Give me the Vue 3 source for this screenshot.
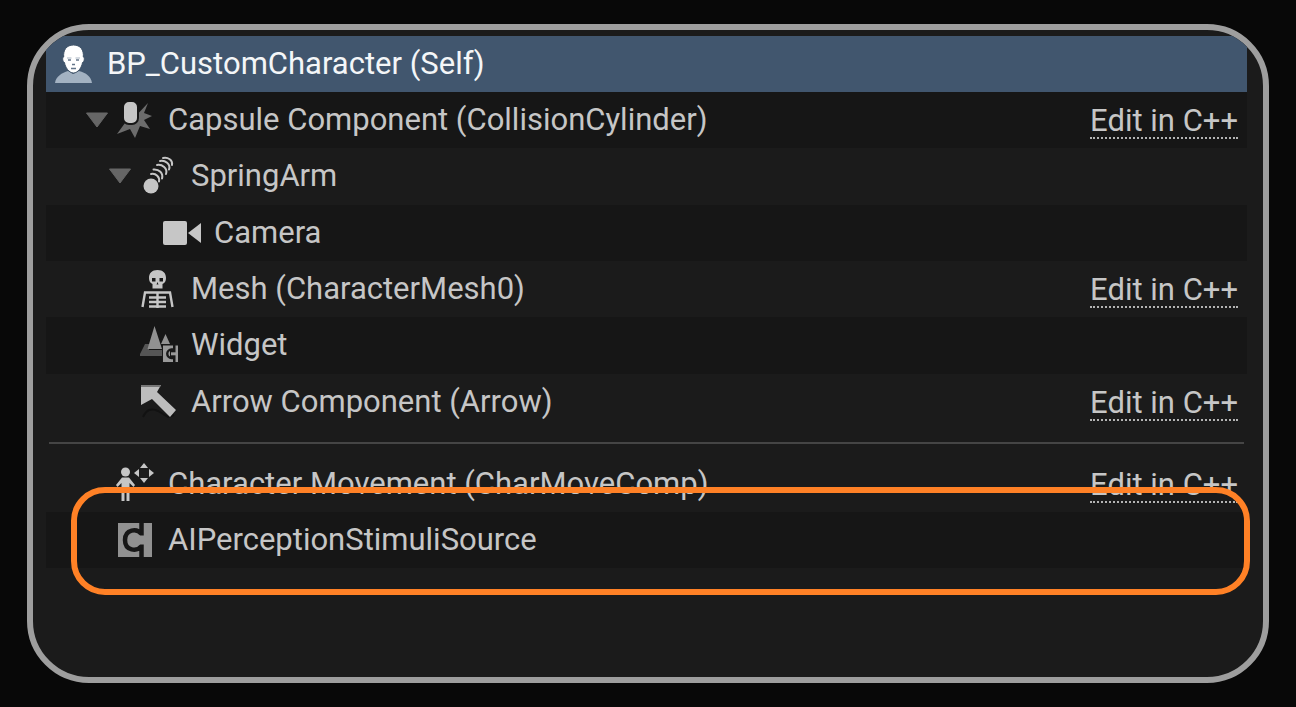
<script setup>
const rows = [
  { label: 'Capsule Component (CollisionCylinder)', icon: 'capsule', depth: 1, caret: true, link: true },
  { label: 'SpringArm', icon: 'spring', depth: 2, caret: true },
  { label: 'Camera', icon: 'camera', depth: 3 },
  { label: 'Mesh (CharacterMesh0)', icon: 'mesh', depth: 2, link: true },
  { label: 'Widget', icon: 'widget', depth: 2 },
  { label: 'Arrow Component (Arrow)', icon: 'arrow', depth: 2, link: true },
]
const extras = [
  { label: 'Character Movement (CharMoveComp)', icon: 'movement', depth: 1, link: true },
  { label: 'AIPerceptionStimuliSource', icon: 'component', depth: 1, marked: true },
]
const groups = [rows, extras]
</script>

<template>
  <main class="stage">
    <section class="frame" aria-label="Components">
      <header class="row root">
        <svg class="avatar" viewBox="0 0 38 38" aria-hidden="true">
          <path d="M0 38C1 31 7 28 13 26L18 29L24 26C31 28 36 31 37 38Z" fill="#a3b2c2" />
          <path d="M18.500 0C11.500 0 8 5 8.700 12C7 12 7.500 17 9.500 17.500C10 22 14 28 18.500 28S27 22 27.500 17.500C29.500 17 30 12 28.300 12C29 5 25.500 0 18.500 0Z" fill="#fff" stroke="#405469" stroke-width="1" />
          <path d="M12 13H16.500M20.500 13H25" fill="none" stroke="#a9b5c2" stroke-width="1" />
          <path d="M13 15H16M21 15H24M17 19.500H20M16 23.500H21" stroke="#64768a" stroke-width="1.600" />
        </svg>
        <h1 class="label">BP_CustomCharacter (Self)</h1>
      </header>

      <template v-for="(group, g) in groups" :key="g">
        <hr v-if="g > 0" class="divider" />
        <ul class="list" :class="g === 0 ? 'tree' : 'flat'">
          <li v-for="row in group" :key="row.label" class="row" :class="'depth-' + row.depth">
            <button v-if="row.caret" class="caret" type="button" :aria-label="'Collapse ' + row.label">
              <svg viewBox="0 0 24 16" aria-hidden="true"><path d="M1.500 1H22.500L12 15Z" fill="#666" stroke="#666" stroke-linejoin="round" /></svg>
            </button>
            <span v-else class="caret"></span>

            <svg class="icon" viewBox="0 0 36 40" aria-hidden="true">
              <g v-if="row.icon === 'capsule'">
                <path d="M15 20L31 3L27 13L35 16L27 20L33 29L23 26L18 38L13 29L0 34L8 23Z" fill="#6c6c6c" />
                <rect x="6" y="1" width="15" height="23" rx="6" fill="#c6c6c6" stroke="#171717" stroke-width="2" />
              </g>
              <g v-else-if="row.icon === 'spring'" fill="none" stroke="#c6c6c6" stroke-width="2" stroke-linecap="round">
                <path d="M11 18C16 17 20 21 19 25.500M13.500 13.500C19 13 23.500 17 22 22.500M17 9C22 8 28 12.500 26 18M20 5C25 4 31 8 29 13.500M23 2C28 1 33 4 32 9" />
                <circle cx="11" cy="30" r="7.500" fill="#c6c6c6" stroke="none" />
              </g>
              <g v-else-if="row.icon === 'camera'" fill="#c6c6c6">
                <rect x="0" y="8" width="24" height="24" rx="2" />
                <path d="M25 20L38 10V30Z" />
              </g>
              <g v-else-if="row.icon === 'mesh'">
                <path d="M17.500 1C12 1 9 4 9 9C9 12 10 14 12.500 15V19.500H22.500V15C25 14 26 12 26 9C26 4 23 1 17.500 1Z" fill="#c6c6c6" />
                <path d="M12 9H15.500V12.500H12ZM19.500 9H23V12.500H19.500ZM17.500 13L18.500 15.500H16.500Z" fill="#181818" />
                <path d="M2.500 38L5 23.500H30L32.500 38M17.500 23V39M9 28.500H26M9 33H26M9 37.500H26" fill="none" stroke="#c6c6c6" stroke-width="2.400" />
              </g>
              <g v-else-if="row.icon === 'widget'">
                <path d="M0 29L5 19H9V25H24V31H0Z" fill="#555" />
                <path d="M14.500 1L22 24H7.500ZM25.500 9L30 19H21Z" fill="#919191" />
                <path d="M22 19H38V38H22Z" fill="#181818" />
                <path d="M23 20.500H33V24H30V33H33V37H23Z" fill="#999" />
                <path d="M35.500 20.500H38V37H35.500Z" fill="#999" />
                <path d="M34 24.500H31.500A4 4 0 0 0 31.500 33H34" fill="none" stroke="#181818" stroke-width="2.400" />
                <path d="M31 28.800H36" stroke="#999" stroke-width="3" />
              </g>
              <g v-else-if="row.icon === 'arrow'">
                <path d="M3 35Q8 24 18 29L28 35L34 33" fill="none" stroke="#121212" stroke-width="2" />
                <path d="M1 3H21L17 10L36 28L30 35L12 17L1 23Z" fill="#bdbdbd" />
                <path d="M1 3H21L20 5H1Z" fill="#777" />
              </g>
              <g v-else-if="row.icon === 'movement'">
                <circle cx="8.500" cy="8" r="4.500" fill="#c6c6c6" />
                <path d="M5 13.500H12L18 21L16.500 23L12.500 19V37H9.500V25H7.500V37H4.500V19L.5 23L-1 21Z" fill="#c6c6c6" />
                <path d="M27 -1L31 4H23ZM27 19L31 14H23ZM17 9L22 5V13ZM37 9L32 5V13Z" fill="#c6c6c6" />
              </g>
              <g v-else>
                <path d="M1 3H35V37H1Z" fill="#919191" />
                <path d="M24.500 3V14C20 8 8 9 8 20S20 32 24.500 26V37" fill="none" stroke="#171717" stroke-width="4.500" />
                <path d="M22 15.500H27V24.500H22Z" fill="#919191" />
              </g>
            </svg>

            <span class="label">{{ row.label }}</span>
            <a v-if="row.link" class="edit" href="#">Edit in C++</a>
            <span v-if="row.marked" class="marker" aria-hidden="true"></span>
          </li>
        </ul>
      </template>
    </section>
  </main>
</template>

<style>
body {
  margin: 0;
  background: #080808;
}
</style>

<style scoped>
.stage {
  box-sizing: border-box;
  min-height: 100vh;
  padding: 24px 27px;
  display: flex;
  font-family: Roboto, "Liberation Sans", sans-serif;
  font-size: 31px;
  line-height: 40px;
  color: #c6c6c6;
}
.frame {
  box-sizing: border-box;
  flex: 1;
  min-width: 0;
  padding: 6px 16px 0 13px;
  border: 6px solid #9e9e9e;
  border-radius: 62px;
  background: #1b1b1b;
  overflow: hidden;
}
.row {
  position: relative;
  display: flex;
  align-items: center;
  min-height: 56px;
  white-space: nowrap;
}
.root {
  gap: 14px;
  padding-left: 9px;
  background: #41566e;
  color: #f4f6f8;
}
.avatar {
  width: 38px;
  height: 38px;
}
.label {
  margin: 0;
  font: inherit;
}
.list {
  display: grid;
  grid-auto-rows: 1fr;
  margin: 0;
  padding: 0;
  list-style: none;
}
.tree {
  min-height: 338px;
}
.tree .row:nth-child(odd),
.flat .row:nth-child(even) {
  background: #161616;
}
.depth-1 { padding-left: 39px; }
.depth-2 { padding-left: 62px; }
.depth-3 { padding-left: 85px; }
.caret {
  flex: none;
  width: 24px;
  height: 16px;
  margin-right: 8px;
  padding: 0;
  border: 0;
  background: none;
}
.caret svg {
  display: block;
  width: 24px;
  height: 16px;
}
.icon {
  flex: none;
  width: 36px;
  height: 40px;
  margin-right: 15px;
  overflow: visible;
}
.edit {
  margin-left: auto;
  margin-right: 9px;
  padding-top: 4px;
  line-height: 32px;
  color: inherit;
  text-decoration: none;
  border-bottom: 2px dotted #b4b4b4;
}
.divider {
  height: 2px;
  margin: 12px 3px;
  border: 0;
  background: #454545;
}
.marker {
  position: absolute;
  inset: -25px -3px -27px 25px;
  border: 6px solid #ff8126;
  border-radius: 34px;
  pointer-events: none;
}
</style>
